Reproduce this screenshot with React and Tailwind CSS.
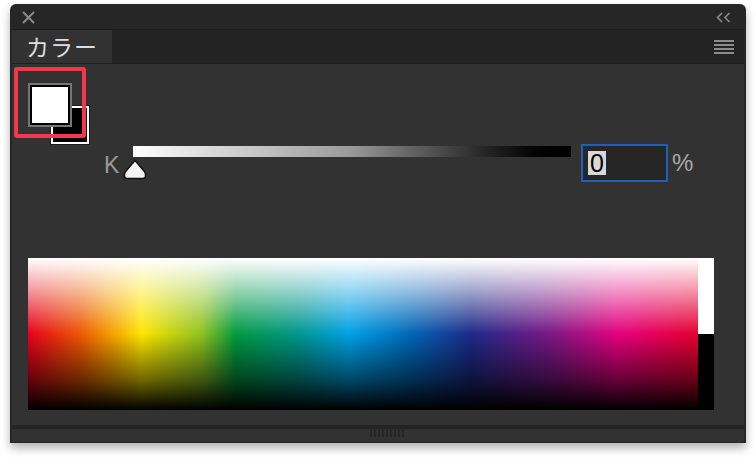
import React from 'react';

const spectrum =
  'bg-[linear-gradient(to_bottom,#ffffff_0%,rgba(255,255,255,0.65)_18%,rgba(255,255,255,0)_50%,rgba(0,0,0,0)_50%,rgba(0,0,0,0.55)_80%,#000000_100%),linear-gradient(to_right,#e50019_0%,#ec5a00_8%,#fce600_17%,#8dc21f_26%,#009a40_31%,#00968a_40%,#00a0e6_48%,#0068b7_57%,#1d2a88_66%,#7a1785_78%,#e4007f_88%,#e6002d_100%)]';

function Swatches() {
  return (
    <div className="relative w-[62px] h-[62px]">
      {/* stroke */}
      <div className="absolute left-[22px] top-[22px] w-[40px] h-[40px] border border-[#1a1a1a] bg-black">
        <div className="w-full h-full border-2 border-white bg-black" />
      </div>
      {/* fill */}
      <div className="absolute left-0 top-0 w-[44px] h-[44px] border-2 border-[#767676] bg-black p-[2px]">
        <div className="w-full h-full bg-white" />
      </div>
      {/* highlight */}
      <div className="absolute -left-[14px] -top-[16px] w-[72px] h-[71px] border-4 border-[#f2384a] rounded-[3px]" />
    </div>
  );
}

export default function App() {
  return (
    <div className="w-[756px] h-[458px] bg-white pt-[4px] pl-[10px]" style={{ fontFamily: '"Liberation Sans", "Noto Sans CJK JP", sans-serif' }}>
      <div className="w-[736px] h-[439px] flex flex-col rounded-t-[6px] overflow-hidden bg-[#262626] shadow-[0_5px_10px_rgba(0,0,0,0.3)] px-[2px]">
        {/* title bar */}
        <div className="h-[26px] flex items-center justify-between pl-[10px] pr-[13px] border-b border-[#1c1c1c]">
          <svg width="13" height="13" viewBox="0 0 13 13" className="mt-[2px]">
            <path d="M1.5 1.5 L11.5 11.5 M11.5 1.5 L1.5 11.5" stroke="#8a8a8a" strokeWidth="2" strokeLinecap="round" />
          </svg>
          <svg width="15" height="11" viewBox="0 0 15 11" className="mt-[2px]">
            <path d="M6 1 L1.5 5.5 L6 10 M13.5 1 L9 5.5 L13.5 10" stroke="#8a8a8a" strokeWidth="1.6" fill="none" />
          </svg>
        </div>

        {/* tab row */}
        <div className="h-[34px] flex items-stretch justify-between bg-[#232323] border-b border-[#1e1e1e]">
          <div className="w-[100px] bg-[#323232] flex items-center pl-[14px]">
            <span className="text-[23px] leading-none text-[#dedede] tracking-[1px]" style={{ fontFamily: '"Noto Sans CJK JP", sans-serif' }}>カラー</span>
          </div>
          <div className="flex flex-col justify-center gap-[2px] pr-[10px] pt-[1px]">
            <div className="w-[20px] h-[2px] bg-[#8c8c8c]" />
            <div className="w-[20px] h-[2px] bg-[#8c8c8c]" />
            <div className="w-[20px] h-[2px] bg-[#8c8c8c]" />
            <div className="w-[20px] h-[2px] bg-[#8c8c8c]" />
          </div>
        </div>

        {/* content */}
        <div className="h-[361px] bg-[#323232] flex flex-col">
          <div className="pl-[16px] pt-[19px]">
            <Swatches />
          </div>

          <div className="flex items-start pl-[92px] -mt-[1px] h-[38px]">
            <div className="w-[29px] h-[38px] flex items-end pb-[5px]">
              <span className="text-[23px] leading-none text-[#9a9a9a]">K</span>
            </div>
            <div className="relative w-[438px] h-[38px]">
              <div className="mt-[2px] h-[11px] bg-linear-to-r from-white via-[#9a9a9a] to-black" />
              <svg width="24" height="21" viewBox="0 0 24 21" className="absolute -left-[10px] top-[15px]">
                <path d="M12 1.5 L3 12 Q1.5 13.5 1.5 15.5 L1.5 17 Q1.5 19.5 4 19.5 L20 19.5 Q22.5 19.5 22.5 17 L22.5 15.5 Q22.5 13.5 21 12 Z" fill="#f4f4f4" stroke="#111" strokeWidth="1.5" />
              </svg>
            </div>
            <div className="ml-[10px] w-[87px] h-[38px] border-2 border-[#1d5fc0] bg-[#262626] flex items-center pl-[5px]">
              <span className="bg-[#d8d8d8] text-black text-[25px] leading-[24px] h-[24px] w-[18px] text-center">0</span>
            </div>
            <div className="ml-[4px] h-[38px] flex items-center">
              <span className="text-[24px] leading-none text-[#a8a8a8]">%</span>
            </div>
          </div>

          <div className="flex pl-[16px] mt-[76px]">
            <div className={`w-[670px] h-[152px] ${spectrum}`} />
            <div className="w-[16px] h-[152px] flex flex-col">
              <div className="h-[76px] bg-white" />
              <div className="h-[76px] bg-black" />
            </div>
          </div>
        </div>

        {/* bottom */}
        <div className="h-[4px] bg-[#242424]" />
        <div className="h-[13px] bg-[#323232] flex justify-center pl-[18px]">
          <div className="flex gap-[2px] h-[8px]">
            {Array.from({ length: 9 }).map((_, i) => (
              <div key={i} className="w-[2px] h-[8px] bg-[#262626]" />
            ))}
          </div>
        </div>
        <div className="h-[1px] bg-[#262626]" />
      </div>
    </div>
  );
}
